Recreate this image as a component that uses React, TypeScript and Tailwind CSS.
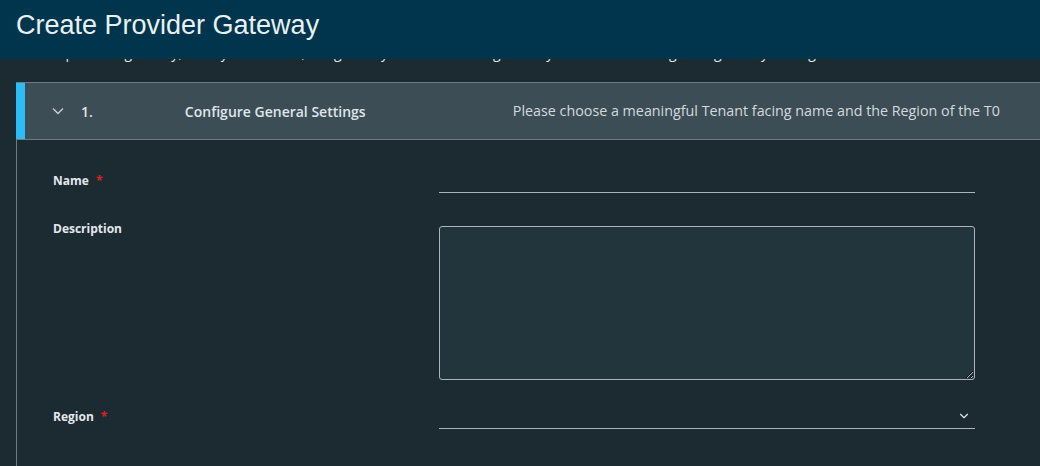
import { ChevronDown } from 'lucide-react';

const FONT = { fontFamily: '"Open Sans", "Noto Sans", sans-serif' };

function Chevron({ className }: { className?: string }) {
  return (
    <svg viewBox="0 0 12 8" className={className} fill="none" stroke="currentColor" strokeWidth="1.4">
      <polyline points="1,1.5 6,6.5 11,1.5" />
    </svg>
  );
}

function Label({ text, required }: { text: string; required?: boolean }) {
  return (
    <span className="text-[12px] font-bold text-[#e3e9ec]">
      {text}
      {required && <span className="ml-[7px] text-[#e02020]">*</span>}
    </span>
  );
}

export default function App() {
  return (
    <div className="relative h-[466px] w-[1040px] overflow-hidden bg-[#1c2a32]" style={FONT}>
      {/* title bar sits over the scrolled intro text */}
      <div className="absolute left-0 top-0 z-10 h-[59px] w-full bg-[#00354d] pl-[16px] pt-[9px]">
        <h1
          className="text-[27px] leading-[32px] text-[#e9f0f3]"
          style={{ fontFamily: '"Liberation Sans", Arial, sans-serif' }}
        >
          Create Provider Gateway
        </h1>
      </div>

      <div className="pl-[16px] pt-[43px]">
        <p className="ml-[37px] whitespace-nowrap text-[14px] leading-[20px] text-[#dfe6e9]">
          A provider gateway, once you create it, is a gateway that can be assigned to your tenants through the gateway settings
        </p>

        <div className="mt-[19px]">
          {/* step header */}
          <div className="flex h-[58px] border-y border-[#6b7c84] bg-[#3d4d55]">
            <div className="w-[9px] shrink-0 bg-[#2cbdf7]" />
            <div className="flex items-center">
              <Chevron className="ml-[27px] h-[8px] w-[12px] text-[#c6ced2]" />
              <span className="ml-[17px] text-[14px] font-semibold text-[#dfe6e9]">1.</span>
              <span className="ml-[92px] w-[328px] text-[14px] font-semibold text-[#dfe6e9]">
                Configure General Settings
              </span>
              <span className="whitespace-nowrap text-[14.3px] text-[#d2dade]">
                Please choose a meaningful Tenant facing name and the Region of the T0
              </span>
            </div>
          </div>

          {/* step body */}
          <div className="border-l border-[#6b7c84] pb-[40px] pl-[36px] pt-[28px]">
            <div className="flex items-center">
              <div className="w-[386px] text-[12px] leading-[16px]">
                <Label text="Name" required />
              </div>
              <div className="h-[25px] w-[536px] border-b border-[#aab4b9]" />
            </div>

            <div className="mt-[33px] flex items-start">
              <div className="-mt-[5px] w-[386px] text-[12px] leading-[16px]">
                <Label text="Description" />
              </div>
              <textarea className="h-[154px] w-[536px] rounded-[3px] border border-[#aab4b9] bg-[#22343c] outline-none" />
            </div>

            <div className="mt-[24px] flex items-center">
              <div className="w-[386px] text-[12px] leading-[16px]">
                <Label text="Region" required />
              </div>
              <div className="flex h-[25px] w-[536px] items-center justify-end border-b border-[#aab4b9] pr-[4px]">
                <ChevronDown className="h-[14px] w-[14px] text-[#dfe6e9]" strokeWidth={2} />
              </div>
            </div>
          </div>
        </div>
      </div>
    </div>
  );
}
